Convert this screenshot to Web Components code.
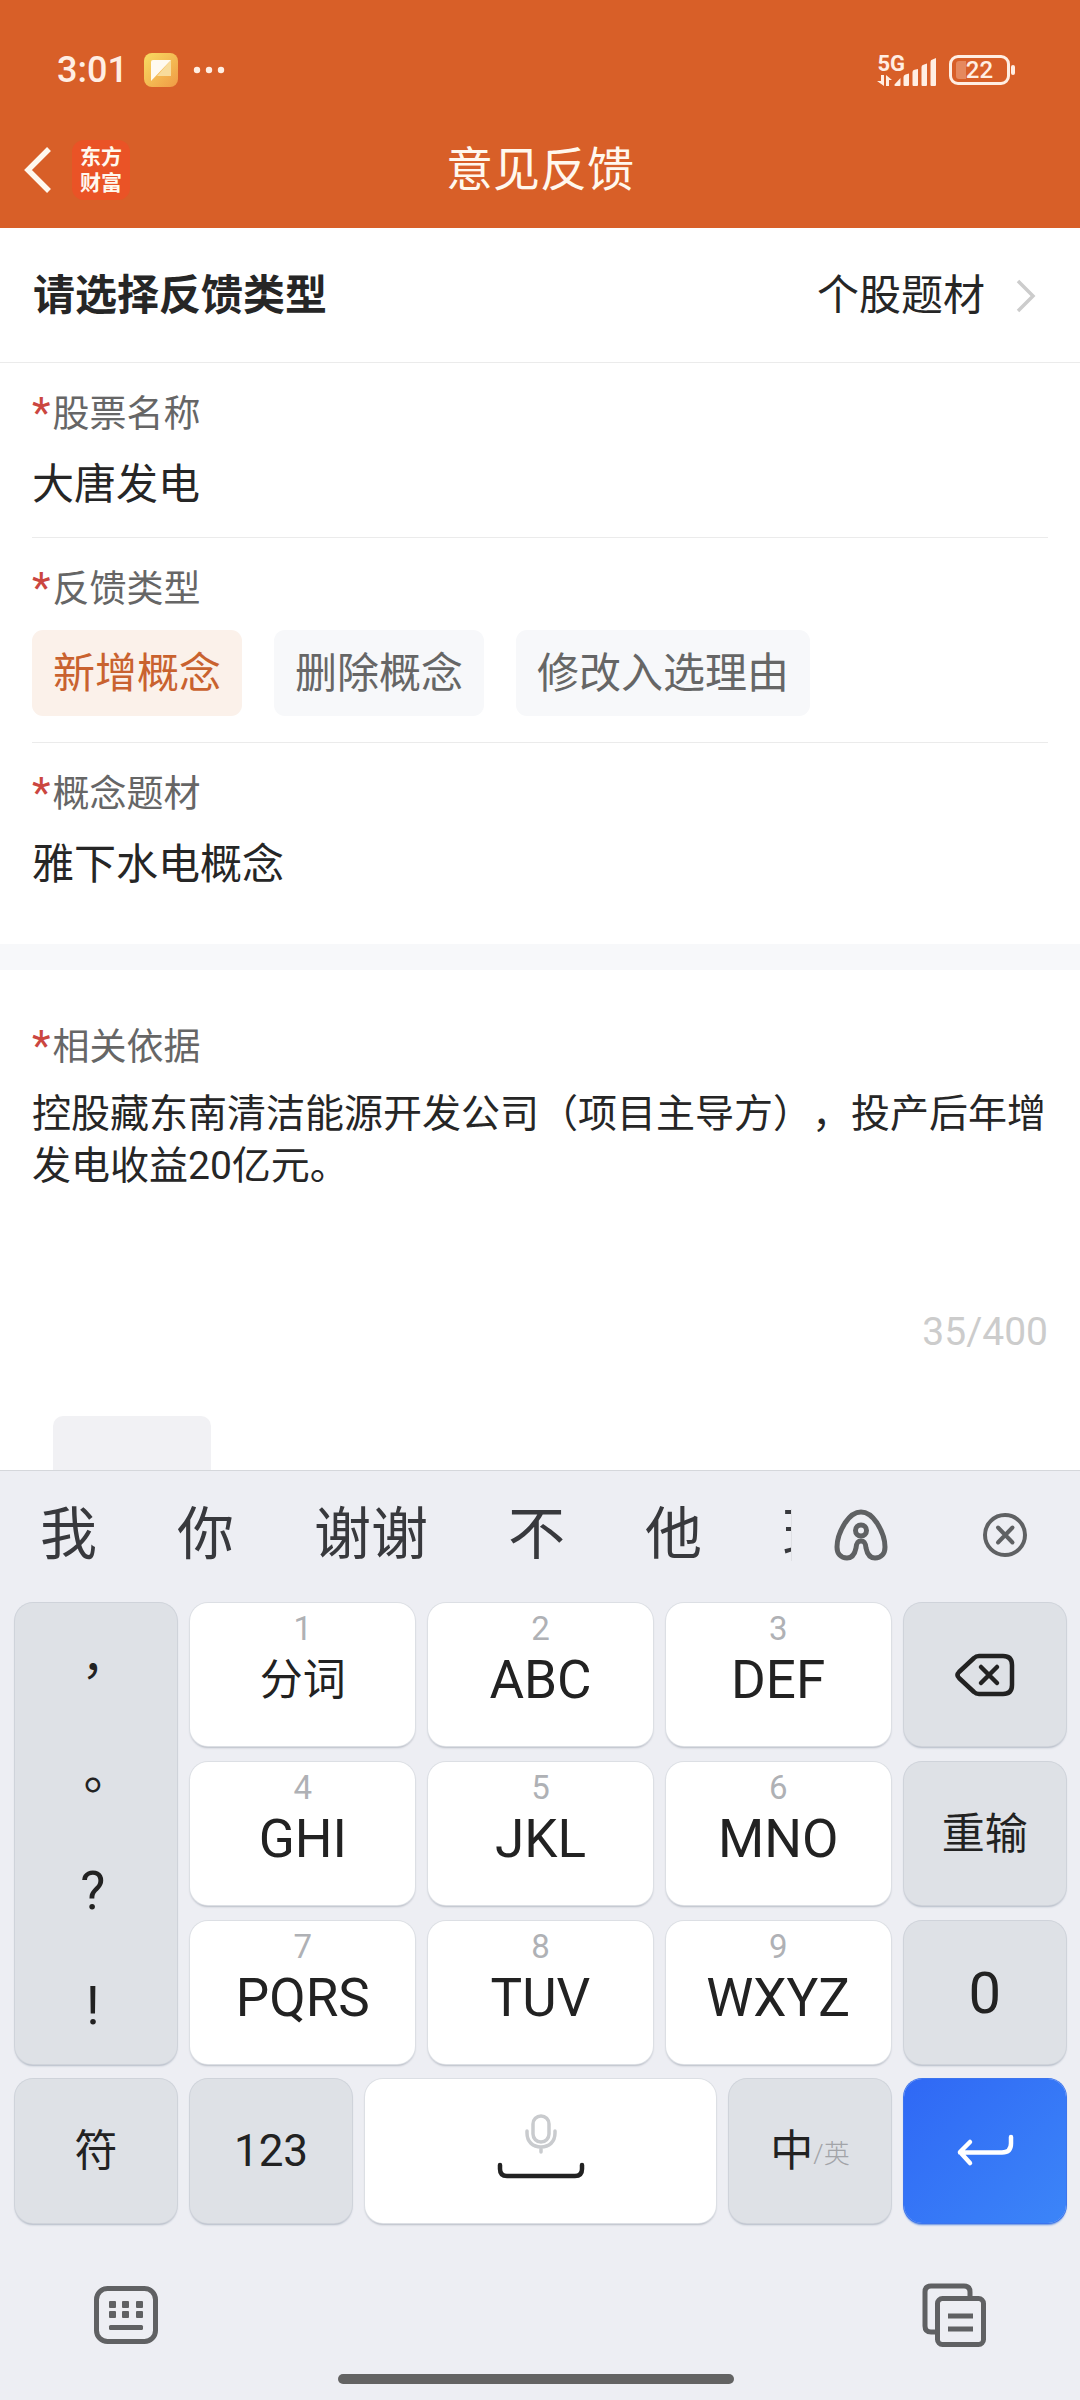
<!DOCTYPE html>
<html lang="zh-CN">
<head>
<meta charset="utf-8">
<meta name="viewport" content="width=device-width, initial-scale=1">
<title>意见反馈</title>
<style>
    body {
        margin: 0;
        background: #fff;
        color: #262626;
        font-family: Roboto, "Noto Sans CJK SC", sans-serif;
        text-spacing-trim: space-all;
    }
</style>
</head>
<body>
<feedback-page></feedback-page>

<script>
const RESET = `
    * { box-sizing: border-box; }
    button, input, textarea {
        margin: 0;
        padding: 0;
        border: 0;
        background: none;
        color: inherit;
        font: inherit;
        outline: none;
        text-spacing-trim: space-all;
    }
    svg { display: block; }
`;

const ICONS = {
    back: [28, 48, `<path d="M25 3 4 24l21 21" fill="none" stroke="currentColor" stroke-width="5.5"/>`],
    chevron: [20, 34, `<path d="M2 2l15 15L2 32" fill="none" stroke="currentColor" stroke-width="3.5"/>`],
    note: [34, 34, `
        <defs><linearGradient id="g" x1="0" y1="0" x2="1" y2="1">
            <stop offset="0" stop-color="#f8dc62"/><stop offset="1" stop-color="#f09a45"/>
        </linearGradient></defs>
        <rect width="34" height="34" rx="8" fill="url(#g)"/>
        <path d="M27 7v16H13z" fill="#f8dc9c"/>
        <path d="M9 7h18L7 28V9q0-2 2-2z" fill="#fffaf0"/>`],
    dots: [32, 8, `<g fill="currentColor"><circle cx="4" cy="4" r="3.2"/><circle cx="16" cy="4" r="3.2"/><circle cx="28" cy="4" r="3.2"/></g>`],
    arrows: [16, 11, `<path d="M4 0h3v11L0 6h4zM9 11V0l6 5h-3v6z" fill="currentColor"/>`],
    signal: [43, 28, `<g fill="currentColor">
        <path d="M6.500 20v7q0 1-1 1h-4q-1.500 0-1-1.500z"/>
        <path d="M15 15.500V27q0 1-1 1h-3.500q-1 0-1-1v-8q0-2 2-2.500z"/>
        <path d="M24 11v16q0 1-1 1h-3.500q-1 0-1-1V14q0-2 2-2.200z"/>
        <path d="M33 5.500V27q0 1-1 1h-3.500q-1 0-1-1V9q0-2 2-2.200z"/>
        <path d="M42 0v27q0 1-1 1h-3.500q-1 0-1-1V4q0-2 2-2.400z"/></g>`],
    assistant: [54, 52, `<g fill="none" stroke="currentColor" stroke-width="5">
        <path d="M27 3C21 3 15 8 11 14 6 22 3 30 3 38c0 7 4 11 10 11s8-5 9-10c.5-5 1.500-7 5-7s4.500 2 5 7c1 5 3 10 9 10s10-4 10-11c0-8-3-16-8-24C39 8 33 3 27 3z" stroke-linejoin="round"/>
        <circle cx="27" cy="21.500" r="5.500"/></g>`],
    close: [46, 46, `<g fill="none" stroke="currentColor" stroke-width="4" stroke-linecap="round">
        <circle cx="23" cy="23" r="20"/><path d="M16 15.500l14.500 15M30.500 15.500L16 30.500"/></g>`],
    backspace: [60, 44, `<g fill="none" stroke="currentColor" stroke-width="4.500" stroke-linecap="round" stroke-linejoin="round">
        <path d="M24 3h24q9 0 9 9v20q0 9-9 9H24q-3 0-5-2L4 25q-3-3 0-6L19 5q2-2 5-2z"/>
        <path d="M26 14l16 16M42 14L26 30"/></g>`],
    enter: [58, 34, `<path d="M14 8L4 18l10 11M4 18.500h42q9 0 9-9V3" fill="none" stroke="currentColor" stroke-width="4.500" stroke-linecap="round" stroke-linejoin="round"/>`],
    mic: [32, 40, `<g fill="none" stroke="currentColor" stroke-width="3.500" stroke-linecap="round">
        <rect x="8" y="2" width="16" height="26" rx="8"/><path d="M2 17v2c0 9 6 14 14 14s14-5 14-14v-2M16 33v5"/></g>`],
    space: [88, 17, `<path d="M3 3v4q0 7 7 7h68q7 0 7-7V3" fill="none" stroke="currentColor" stroke-width="4.500" stroke-linecap="round"/>`],
    keyboard: [66, 60, `<rect x="3.500" y="3.500" width="59" height="53" rx="11" fill="none" stroke="currentColor" stroke-width="5"/>
        <g fill="currentColor">
        <rect x="16" y="16" width="7" height="7" rx="1"/><rect x="29" y="16" width="7" height="7" rx="1"/><rect x="43" y="16" width="7" height="7" rx="1"/>
        <rect x="16" y="26" width="7" height="7" rx="1"/><rect x="29" y="26" width="7" height="7" rx="1"/><rect x="43" y="26" width="7" height="7" rx="1"/>
        <rect x="16" y="40" width="34" height="5" rx="1.500"/></g>`],
    clipboard: [64, 64, `<g fill="none" stroke="currentColor" stroke-width="5">
        <path d="M48 13V9q0-6-6-6H9Q3 3 3 9v34q0 6 6 6h5"/>
        <rect x="15.500" y="15.500" width="46" height="46" rx="5"/>
        <path d="M26 33h25M26 46h25"/></g>`]
};

class UiIcon extends HTMLElement {
    constructor() {
        super();
        this.attachShadow({ mode: 'open' });
    }

    connectedCallback() {
        const [w, h, body] = ICONS[this.getAttribute('name')];
        this.shadowRoot.innerHTML = `
            <style>
                :host { display: block; flex: none; }
                svg { display: block; }
            </style>
            <svg width="${w}" height="${h}" viewBox="0 0 ${w} ${h}" aria-hidden="true">${body}</svg>
        `;
    }
}

class StatusBar extends HTMLElement {
    constructor() {
        super();
        this.attachShadow({ mode: 'open' });
    }

    connectedCallback() {
        this.shadowRoot.innerHTML = `
            <style>
                :host {
                    display: flex;
                    align-items: center;
                    justify-content: space-between;
                    height: 140px;
                    padding: 0 70px 0 57px;
                    color: #ffeee3;
                }
                .side { display: flex; align-items: center; }
                .time { font-size: 36px; line-height: 44px; font-weight: 500; margin-right: 16px; }
                .side ui-icon[name="note"] { margin-right: 15px; }
                .net { display: flex; flex-direction: column; gap: 3px; font-size: 22px; line-height: 17px; font-weight: 700; }
                .cell { display: flex; align-items: flex-end; }
                ui-icon[name="signal"] { margin-left: -11px; }
                .battery {
                    position: relative;
                    display: flex;
                    align-items: center;
                    justify-content: center;
                    width: 61px;
                    height: 30px;
                    margin-left: 12px;
                    border: 3px solid currentColor;
                    border-radius: 9px;
                    font-size: 24px;
                    line-height: 24px;
                    font-weight: 500;
                    box-sizing: border-box;
                }
                .battery::before {
                    content: "";
                    position: absolute;
                    left: 4px;
                    top: 3px;
                    width: 10px;
                    height: 18px;
                    border-radius: 3px 0 0 3px;
                    background: #e5895e;
                }
                .battery::after {
                    content: "";
                    position: absolute;
                    right: -8px;
                    top: 7px;
                    width: 4px;
                    height: 10px;
                    border-radius: 2px;
                    background: currentColor;
                }
            </style>
            <div class="side">
                <span class="time">3:01</span>
                <ui-icon name="note"></ui-icon>
                <ui-icon name="dots"></ui-icon>
            </div>
            <div class="side">
                <div class="cell">
                    <div class="net"><span>5G</span><ui-icon name="arrows"></ui-icon></div>
                    <ui-icon name="signal"></ui-icon>
                </div>
                <div class="battery">22</div>
            </div>
        `;
    }
}

class NavBar extends HTMLElement {
    constructor() {
        super();
        this.attachShadow({ mode: 'open' });
    }

    connectedCallback() {
        this.shadowRoot.innerHTML = `
            <style>
                ${RESET}
                :host {
                    display: grid;
                    grid-template-columns: 1fr auto 1fr;
                    align-items: center;
                    height: 60px;
                    padding: 0 24px 28px;
                    color: #fff8ee;
                }
                .left { display: flex; align-items: center; gap: 20px; }
                .logo {
                    display: flex;
                    flex-direction: column;
                    align-items: center;
                    justify-content: center;
                    width: 58px;
                    height: 60px;
                    padding-bottom: 4px;
                    border-radius: 12px;
                    background: #ea5326;
                    font: 700 21px/26px "Noto Sans CJK SC", sans-serif;
                }
                h1 { margin: 0; font-size: 47px; line-height: 60px; font-weight: 400; }
            </style>
            <div class="left">
                <button aria-label="返回"><ui-icon name="back"></ui-icon></button>
                <div class="logo"><span>东方</span><span>财富</span></div>
            </div>
            <h1><slot></slot></h1>
        `;
    }
}

class PickerRow extends HTMLElement {
    constructor() {
        super();
        this.attachShadow({ mode: 'open' });
    }

    connectedCallback() {
        this.shadowRoot.innerHTML = `
            <style>
                ${RESET}
                :host { display: block; border-bottom: 1px solid #ebebeb; }
                button {
                    display: flex;
                    align-items: center;
                    width: 100%;
                    height: 134px;
                    padding: 2px 44px 0 33px;
                    font-size: 42px;
                    line-height: 60px;
                    text-align: left;
                }
                .label { flex: 1; font-weight: 600; }
                ui-icon { margin-left: 31px; color: #ccc; }
            </style>
            <button>
                <span class="label">${this.getAttribute('label')}</span>
                <span><slot></slot></span>
                <ui-icon name="chevron"></ui-icon>
            </button>
        `;
    }
}

const FIELD = `
    ${RESET}
    :host { display: block; padding: 26px 0 22px; border-bottom: 1px solid #ebebeb; }
    :host([last]) { border-bottom-color: transparent; }
    .label {
        display: block;
        padding: 0;
        margin-bottom: 14px;
        color: #666;
        font-size: 37px;
        line-height: 52px;
    }
    .label::before { content: "*"; margin-right: 2px; color: #cb4640; font-size: 43px; line-height: 1; }
`;

class TextField extends HTMLElement {
    constructor() {
        super();
        this.attachShadow({ mode: 'open' });
    }

    connectedCallback() {
        this.shadowRoot.innerHTML = `
            <style>
                ${FIELD}
                input { display: block; width: 100%; height: 60px; font-size: 42px; line-height: 60px; }
            </style>
            <label class="label" for="value">${this.getAttribute('label')}</label>
            <input id="value" type="text" value="${this.getAttribute('value')}">
        `;
    }
}

class ChipField extends HTMLElement {
    constructor() {
        super();
        this.attachShadow({ mode: 'open' });
    }

    connectedCallback() {
        const options = this.getAttribute('options').split(',');
        this.shadowRoot.innerHTML = `
            <style>
                ${FIELD}
                :host { padding-bottom: 26px; }
                fieldset { margin: 0; padding: 0; border: 0; min-width: 0; }
                .chips { display: flex; flex-wrap: wrap; gap: 32px; }
                .chip {
                    position: relative;
                    height: 86px;
                    padding: 2px 21px 0;
                    border-radius: 11px;
                    background: #f7f8fa;
                    color: #666;
                    font-size: 42px;
                    line-height: 84px;
                }
                .chip input { position: absolute; inset: 0; opacity: 0; appearance: none; }
                .chip:has(:checked) { background: #fbf1ea; color: #c9622f; }
            </style>
            <fieldset>
                <legend class="label">${this.getAttribute('label')}</legend>
                <div class="chips">
                    ${options.map((text, i) => `
                        <label class="chip"><input type="radio" name="kind" ${i === 0 ? 'checked' : ''}>${text}</label>
                    `).join('')}
                </div>
            </fieldset>
        `;
    }
}

class NoteField extends HTMLElement {
    constructor() {
        super();
        this.attachShadow({ mode: 'open' });
    }

    connectedCallback() {
        this.shadowRoot.innerHTML = `
            <style>
                ${FIELD}
                :host { border: 0; }
                textarea {
                    display: block;
                    width: 100%;
                    height: 208px;
                    resize: none;
                    overflow: hidden;
                    font-size: 39px;
                    line-height: 52px;
                }
                .count { margin-top: 10px; text-align: right; color: #ccc; font-size: 39px; line-height: 52px; }
            </style>
            <label class="label" for="note">${this.getAttribute('label')}</label>
            <textarea id="note" maxlength="400">${this.getAttribute('value')}</textarea>
            <div class="count">35/400</div>
        `;
    }
}

class KeyCap extends HTMLElement {
    constructor() {
        super();
        this.attachShadow({ mode: 'open' });
    }

    connectedCallback() {
        const hint = this.getAttribute('hint');
        this.shadowRoot.innerHTML = `
            <style>
                ${RESET}
                :host { display: block; min-width: 0; color: #222; font-size: 53px; }
                :host([kind="zh"]) { font-size: 43px; }
                :host([kind="num"]) { font-size: 44px; }
                :host([kind="zero"]) { font-size: 58px; }
                button {
                    display: flex;
                    flex-direction: column;
                    align-items: center;
                    justify-content: center;
                    width: 100%;
                    height: 100%;
                    border-radius: 18px;
                    background: #fff;
                    line-height: 60px;
                    box-shadow: 0 0 0 1px #dcdfe4, 0 2px 2px #b9bdc6;
                }
                .text { display: flex; flex-direction: column; align-items: center; }
                :host([tone="grey"]) button { background: #dee1e6; box-shadow: 0 0 0 1px #cfd3da, 0 2px 2px #b3bac6; }
                :host([tone="blue"]) button {
                    background: linear-gradient(135deg, #2f68f5, #3c85f8);
                    color: #fff;
                    box-shadow: 0 0 0 1px #3c74ee, 0 2px 2px #5b8be0;
                }
                :host([hint]) button { justify-content: flex-start; padding-top: 8px; }
                .hint { color: #afb1b5; font-size: 33px; line-height: 36px; margin-bottom: 3px; }
            </style>
            <button>
                ${hint ? `<span class="hint">${hint}</span>` : ''}
                <span class="text"><slot></slot></span>
            </button>
        `;
    }
}

class MarkPad extends HTMLElement {
    constructor() {
        super();
        this.attachShadow({ mode: 'open' });
    }

    connectedCallback() {
        this.shadowRoot.innerHTML = `
            <style>
                ${RESET}
                :host {
                    display: grid;
                    grid-template-rows: repeat(4, minmax(0, 1fr));
                    padding-right: 7px;
                    border-radius: 18px;
                    background: #dee1e6;
                    box-shadow: 0 0 0 1px #cfd3da, 0 2px 2px #b3bac6;
                    color: #222;
                    font: 53px/60px Roboto, "Noto Sans CJK TC", sans-serif;
                }
                .wide { padding-top: 22px; font-size: 48px; }
            </style>
            <button class="wide" lang="zh-TW">，</button>
            <button class="wide" lang="zh-TW">。</button>
            <button>?</button>
            <button>!</button>
        `;
    }
}

class CandidateBar extends HTMLElement {
    constructor() {
        super();
        this.attachShadow({ mode: 'open' });
    }

    connectedCallback() {
        const words = this.getAttribute('words').split(',');
        this.shadowRoot.innerHTML = `
            <style>
                ${RESET}
                :host { display: flex; align-items: center; height: 128px; }
                .words {
                    display: flex;
                    flex: 1;
                    min-width: 0;
                    gap: 80px;
                    padding-left: 40px;
                    overflow: hidden;
                    color: #38393d;
                    font-size: 57px;
                    line-height: 88px;
                }
                .words button { flex: none; }
                .tools {
                    display: grid;
                    grid-template-columns: 138px 150px;
                    justify-items: center;
                    align-items: center;
                    width: 289px;
                    border-left: 1px solid #dfe0e4;
                    color: #5f6163;
                }
            </style>
            <div class="words">${words.map(word => `<button>${word}</button>`).join('')}</div>
            <div class="tools">
                <button aria-label="助手"><ui-icon name="assistant"></ui-icon></button>
                <button aria-label="关闭"><ui-icon name="close"></ui-icon></button>
            </div>
        `;
    }
}

class ImeKeyboard extends HTMLElement {
    constructor() {
        super();
        this.attachShadow({ mode: 'open' });
    }

    connectedCallback() {
        this.shadowRoot.innerHTML = `
            <style>
                ${RESET}
                :host { display: block; border-top: 1px solid #d5d7db; background: #edeef3; }
                .keys {
                    display: grid;
                    grid-template-columns: 162fr 224fr 224fr 224fr 162fr;
                    grid-auto-rows: 143px;
                    gap: 16px 13px;
                    padding: 4px 14px 0 15px;
                }
                mark-pad { grid-row: span 3; }
                .bottom {
                    display: grid;
                    grid-template-columns: 162fr 162fr 351fr 162fr 162fr;
                    grid-auto-rows: 144px;
                    gap: 13px;
                    padding: 15px 14px 0 15px;
                }
                .mic { color: #c9cbce; margin-bottom: 8px; }
                .bar { margin-bottom: 10px; }
                .lang { display: flex; align-items: center; }
                .lang small { padding-top: 6px; color: #a2a4a8; font-size: 26px; font-weight: 300; }
                .tools {
                    display: flex;
                    align-items: center;
                    justify-content: space-between;
                    padding: 60px 94px 27px 93px;
                    color: #606163;
                }
                .foot { padding: 0 8px 16px 0; }
                .home { width: 37%; height: 10px; margin: 0 auto; border-radius: 5px; background: #636363; }
            </style>
            <candidate-bar words="我,你,谢谢,不,他,现"></candidate-bar>
            <div class="keys">
                <mark-pad></mark-pad>
                <key-cap hint="1" kind="zh">分词</key-cap>
                <key-cap hint="2">ABC</key-cap>
                <key-cap hint="3">DEF</key-cap>
                <key-cap tone="grey" aria-label="退格"><ui-icon name="backspace"></ui-icon></key-cap>
                <key-cap hint="4">GHI</key-cap>
                <key-cap hint="5">JKL</key-cap>
                <key-cap hint="6">MNO</key-cap>
                <key-cap tone="grey" kind="zh">重输</key-cap>
                <key-cap hint="7">PQRS</key-cap>
                <key-cap hint="8">TUV</key-cap>
                <key-cap hint="9">WXYZ</key-cap>
                <key-cap tone="grey" kind="zero">0</key-cap>
            </div>
            <div class="bottom">
                <key-cap tone="grey" kind="zh">符</key-cap>
                <key-cap tone="grey" kind="num">123</key-cap>
                <key-cap aria-label="空格"><ui-icon class="mic" name="mic"></ui-icon><ui-icon class="bar" name="space"></ui-icon></key-cap>
                <key-cap tone="grey" kind="zh"><span class="lang">中<small>/英</small></span></key-cap>
                <key-cap tone="blue" aria-label="换行"><ui-icon name="enter"></ui-icon></key-cap>
            </div>
            <div class="tools">
                <button aria-label="切换键盘"><ui-icon name="keyboard"></ui-icon></button>
                <button aria-label="剪贴板"><ui-icon name="clipboard"></ui-icon></button>
            </div>
            <div class="foot"><div class="home"></div></div>
        `;
    }
}

class FeedbackPage extends HTMLElement {
    constructor() {
        super();
        this.attachShadow({ mode: 'open' });
    }

    connectedCallback() {
        this.shadowRoot.innerHTML = `
            <style>
                :host { display: flex; flex-direction: column; height: 100vh; overflow: hidden; }
                header { flex: none; background: #d85f28; }
                main { flex: 1; min-height: 0; overflow: hidden; }
                section { padding: 0 32px 26px; }
                section + section { padding-top: 26px; border-top: 26px solid #f7f8fa; }
                .photo { width: 158px; height: 158px; margin: 36px 0 0 21px; border-radius: 10px; background: #f1f1f4; }
                ime-keyboard { flex: none; }
            </style>
            <header>
                <status-bar></status-bar>
                <nav-bar>意见反馈</nav-bar>
            </header>
            <main>
                <picker-row label="请选择反馈类型">个股题材</picker-row>
                <section>
                    <text-field label="股票名称" value="大唐发电"></text-field>
                    <chip-field label="反馈类型" options="新增概念,删除概念,修改入选理由"></chip-field>
                    <text-field label="概念题材" value="雅下水电概念" last></text-field>
                </section>
                <section>
                    <note-field label="相关依据" value="控股藏东南清洁能源开发公司（项目主导方），投产后年增发电收益20亿元。"></note-field>
                    <div class="photo"></div>
                </section>
            </main>
            <ime-keyboard></ime-keyboard>
        `;
    }
}

customElements.define('ui-icon', UiIcon);
customElements.define('status-bar', StatusBar);
customElements.define('nav-bar', NavBar);
customElements.define('picker-row', PickerRow);
customElements.define('text-field', TextField);
customElements.define('chip-field', ChipField);
customElements.define('note-field', NoteField);
customElements.define('key-cap', KeyCap);
customElements.define('mark-pad', MarkPad);
customElements.define('candidate-bar', CandidateBar);
customElements.define('ime-keyboard', ImeKeyboard);
customElements.define('feedback-page', FeedbackPage);
</script>
</body>
</html>
